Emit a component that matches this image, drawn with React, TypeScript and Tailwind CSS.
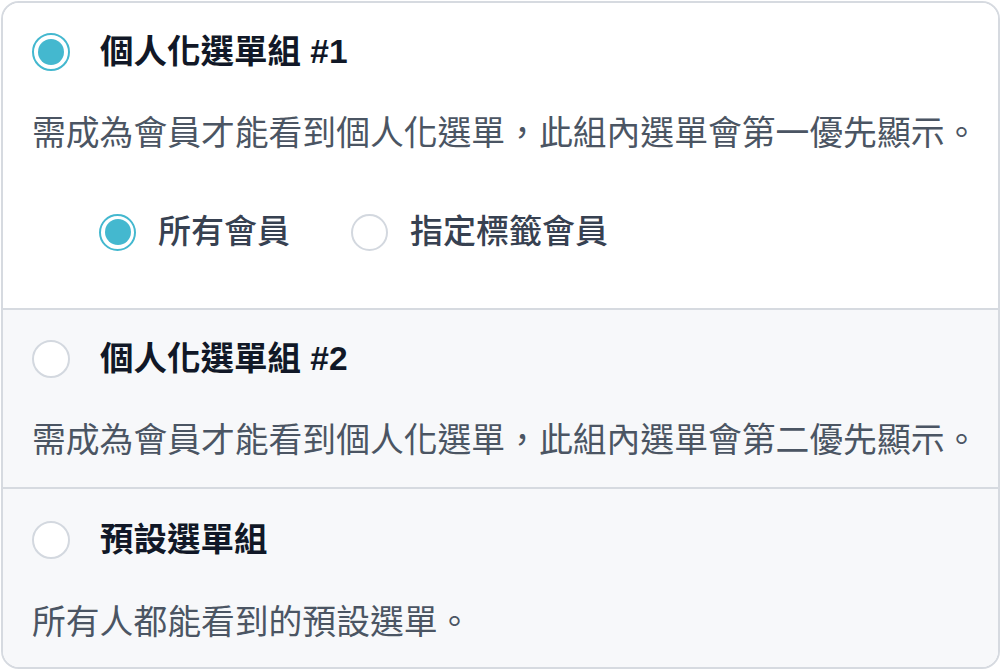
const FONT = { fontFamily: '"Liberation Sans", "Noto Sans CJK TC", sans-serif' };

function Radio({ checked, size = 38 }: { checked?: boolean; size?: number }) {
  return (
    <span
      className={
        "flex shrink-0 items-center justify-center rounded-full border-2 bg-white " +
        (checked ? "border-[#44b8cf]" : "border-[#d3d8df]")
      }
      style={{ width: size, height: size }}
    >
      {checked ? <span className="h-[26px] w-[26px] rounded-full bg-[#44b8cf]" /> : null}
    </span>
  );
}

const groups = [
  {
    title: "個人化選單組 #1",
    desc: "需成為會員才能看到個人化選單，此組內選單會第一優先顯示。",
    checked: true,
  },
  {
    title: "個人化選單組 #2",
    desc: "需成為會員才能看到個人化選單，此組內選單會第二優先顯示。",
    checked: false,
  },
  {
    title: "預設選單組",
    desc: "所有人都能看到的預設選單。",
    checked: false,
  },
];

export default function App() {
  return (
    <div className="h-[670px] w-[1001px] bg-white p-px" style={FONT}>
      <div className="flex h-[668px] flex-col overflow-hidden rounded-[18px] border-2 border-[#d6dae0]">
        {groups.map((g, i) => (
          <div
            key={g.title}
            className={
              "px-[29px] " +
              (i === 0 ? "bg-white pt-[29px] pb-[56px]" : "bg-[#f7f8fa] pb-[27px]") +
              (i === 1 ? " pt-[29px]" : "") +
              (i === 2 ? " pt-[31px]" : "") +
              (i < groups.length - 1 ? " border-b-2 border-[#d6dae0]" : " flex-1")
            }
          >
            <div className="flex h-10 items-center gap-[30px]">
              <Radio checked={g.checked} />
              <span className="whitespace-nowrap text-[33.5px] font-bold text-[#111827]">{g.title}</span>
            </div>
            <p
              className={
                "h-10 whitespace-nowrap text-[33.8px] leading-10 text-[#4b5563] " +
                (i === 2 ? "mt-[42px]" : "mt-[41px]")
              }
            >
              {g.desc}
            </p>
            {i === 0 ? (
              <div className="mt-[59px] flex h-10 items-center pl-[67px] text-[33px] font-medium text-[#374151]">
                <Radio checked size={37} />
                <span className="ml-[22px]">所有會員</span>
                <span className="ml-[61px]">
                  <Radio size={37} />
                </span>
                <span className="ml-[22px]">指定標籤會員</span>
              </div>
            ) : null}
          </div>
        ))}
      </div>
    </div>
  );
}
